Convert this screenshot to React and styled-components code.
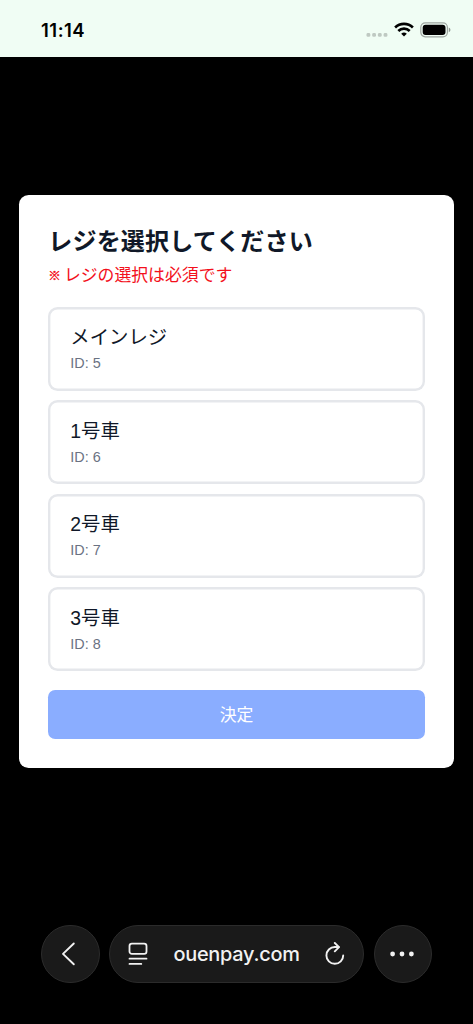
import React from 'react';
import styled, { createGlobalStyle, ThemeProvider } from 'styled-components';

const theme = {
  colors: {
    Mint: '#f0fdf4',
    Black: '#000000',
    White: '#ffffff',
    Ink: '#101828',
    Gray: '#6a7282',
    Line: '#e5e7eb',
    Red: '#f3101c',
    Blue: '#8aadff',
    Bar: '#1a1a1a',
    BarLine: '#2b2b2b',
    BarText: '#f2f2f2'
  },
  fonts: {
    Default: "'Liberation Sans', 'Noto Sans CJK JP', sans-serif",
    System: "Inter, 'Noto Sans CJK JP', sans-serif"
  }
};

const GlobalStyle = createGlobalStyle`
  * {
    box-sizing: border-box;
  }

  body {
    margin: 0;
    background: #000000;
  }
`;

const Screen = styled.div`
  display: flex;
  flex-direction: column;
  height: 1024px;
  overflow: hidden;
  background: ${(props) => props.theme.colors.Black};
  font-family: ${(props) => props.theme.fonts.Default};
`;

const StatusBar = styled.header`
  display: flex;
  align-items: center;
  justify-content: space-between;
  height: 57px;
  padding: 2px 22px 0 41px;
  background: ${(props) => props.theme.colors.Mint};
`;

const Time = styled.span`
  font-family: ${(props) => props.theme.fonts.System};
  font-size: 18.5px;
  font-weight: 600;
  line-height: 24px;
  letter-spacing: 0.5px;
  color: ${(props) => props.theme.colors.Black};
`;

const StatusIcons = styled.div`
  display: flex;
  align-items: center;
`;

const Main = styled.main`
  flex: 1;
  padding: 137.7px 19.3px 0;
`;

const Dialog = styled.section`
  display: flex;
  flex-direction: column;
  height: 573px;
  padding: 29px;
  border-radius: 9.6px;
  background: ${(props) => props.theme.colors.White};
`;

const Title = styled.h1`
  margin: 0;
  padding-top: 1px;
  font-size: 24.07px;
  font-weight: 700;
  line-height: 34px;
  letter-spacing: 0.12px;
  color: ${(props) => props.theme.colors.Ink};
`;

const Hint = styled.p`
  display: flex;
  align-items: center;
  gap: 3px;
  margin: 3px 0 17px;
  font-size: 16.85px;
  line-height: 27px;
  color: ${(props) => props.theme.colors.Red};
`;

const HintMark = styled.span`
  padding-top: 1px;
  font-size: 12.6px;
  font-weight: 700;
  -webkit-text-stroke: 0.4px;
`;

const RegisterList = styled.div`
  display: flex;
  flex-direction: column;
  gap: 9.6px;
`;

const RegisterButton = styled.button`
  display: flex;
  flex-direction: column;
  height: 83.9px;
  padding: 16.6px 22px 0;
  border: none;
  border-radius: 9.6px;
  background: ${(props) => props.theme.colors.White};
  box-shadow: inset 0 0 0 2.4px ${(props) => props.theme.colors.Line};
  font-family: inherit;
  text-align: left;
`;

const RegisterName = styled.span`
  font-size: 19.4px;
  line-height: 29px;
  color: ${(props) => props.theme.colors.Ink};
`;

const RegisterId = styled.span`
  font-size: 14.4px;
  line-height: 23px;
  color: ${(props) => props.theme.colors.Gray};
`;

const SubmitButton = styled.button`
  height: 49px;
  margin-top: 19px;
  padding: 0 0 2px;
  border: none;
  border-radius: 7.2px;
  background: ${(props) => props.theme.colors.Blue};
  font-family: inherit;
  font-size: 16.85px;
  color: ${(props) => props.theme.colors.White};
`;

const BrowserBar = styled.nav`
  display: flex;
  justify-content: space-between;
  padding: 0 41px 41px;
`;

const RoundButton = styled.button`
  display: flex;
  align-items: center;
  justify-content: center;
  width: 58.5px;
  height: 58.5px;
  padding: 0;
  border: 1px solid ${(props) => props.theme.colors.BarLine};
  border-radius: 50%;
  background: ${(props) => props.theme.colors.Bar};
`;

const AddressBar = styled.div`
  display: flex;
  align-items: center;
  justify-content: space-between;
  width: 255px;
  height: 58.5px;
  padding: 0 18px;
  border: 1px solid ${(props) => props.theme.colors.BarLine};
  border-radius: 30px;
  background: ${(props) => props.theme.colors.Bar};
`;

const Address = styled.span`
  font-family: ${(props) => props.theme.fonts.System};
  font-size: 19.9px;
  font-weight: 500;
  letter-spacing: -0.25px;
  color: ${(props) => props.theme.colors.BarText};
`;

const SignalIcon = () => (
  <svg width='22' height='16' viewBox='0 0 22 16' fill='#000' opacity='0.2'>
    <rect x='0.5' y='11' width='3.8' height='3.8' rx='1.4' />
    <rect x='6.2' y='11' width='3.8' height='3.8' rx='1.4' />
    <rect x='11.9' y='11' width='3.8' height='3.8' rx='1.4' />
    <rect x='17.6' y='11' width='3.8' height='3.8' rx='1.4' />
  </svg>
);

const WifiIcon = () => (
  <svg
    width='20'
    height='15'
    viewBox='0 0 20 15'
    fill='none'
    stroke='#000'
    strokeWidth='2.6'
    style={{ marginLeft: 6 }}
  >
    <path d='M1.1 5.5a12.7 12.7 0 0 1 17.8 0' />
    <path d='M4.3 9a8 8 0 0 1 11.4 0' />
    <path
      d='M7.2 11.8a4.2 4.2 0 0 1 5.6 0L10 14.6Z'
      fill='#000'
      stroke='none'
    />
  </svg>
);

const BatteryIcon = () => (
  <svg
    width='31'
    height='16'
    viewBox='0 0 31 16'
    fill='none'
    style={{ marginLeft: 6 }}
  >
    <rect
      x='0.8'
      y='0.8'
      width='26.6'
      height='14'
      rx='4.5'
      stroke='#000'
      strokeOpacity='0.35'
      strokeWidth='1.2'
    />
    <rect x='2.7' y='2.7' width='22.8' height='10.2' rx='2.9' fill='#000' />
    <path d='M28.8 5.4v4.8c2.2-.9 2.2-3.9 0-4.8Z' fill='#000' opacity='0.4' />
  </svg>
);

const BackIcon = () => (
  <svg
    width='16'
    height='26'
    viewBox='0 0 16 26'
    fill='none'
    stroke='#f2f2f2'
    strokeWidth='1.9'
    strokeLinecap='round'
    strokeLinejoin='round'
    style={{ marginRight: 4 }}
  >
    <path d='M13.8 2.5 3 12.9l10.8 10.4' />
  </svg>
);

const PageMenuIcon = () => (
  <svg
    width='20'
    height='24'
    viewBox='0 0 20 24'
    fill='none'
    stroke='#f2f2f2'
    strokeWidth='1.8'
    strokeLinecap='round'
  >
    <rect x='1.5' y='1.6' width='17' height='10.2' rx='2.4' />
    <path d='M1.5 16.7h17M1.5 21.9h11.8' />
  </svg>
);

const ReloadIcon = () => (
  <svg
    width='20'
    height='24'
    viewBox='0 0 20 24'
    fill='none'
    stroke='#f2f2f2'
    strokeWidth='1.9'
    strokeLinecap='round'
    strokeLinejoin='round'
  >
    <path d='M18.2 13.4A8.4 8.4 0 1 1 9.8 5h3.8' />
    <path d='M9.8 1l4.2 4.1-4.2 4.2' />
  </svg>
);

const MoreIcon = () => (
  <svg
    width='26'
    height='6'
    viewBox='0 0 26 6'
    fill='#f2f2f2'
    style={{ marginRight: 1 }}
  >
    <circle cx='3.6' cy='3' r='2.4' />
    <circle cx='13' cy='3' r='2.4' />
    <circle cx='22.4' cy='3' r='2.4' />
  </svg>
);

const registers = [
  { id: 5, name: 'メインレジ' },
  { id: 6, name: '1号車' },
  { id: 7, name: '2号車' },
  { id: 8, name: '3号車' }
];

const App = () => (
  <ThemeProvider theme={theme}>
    <GlobalStyle />
    <Screen>
      <StatusBar>
        <Time>11:14</Time>
        <StatusIcons>
          <SignalIcon />
          <WifiIcon />
          <BatteryIcon />
        </StatusIcons>
      </StatusBar>
      <Main>
        <Dialog>
          <Title>レジを選択してください</Title>
          <Hint>
            <HintMark>※</HintMark>
            レジの選択は必須です
          </Hint>
          <RegisterList>
            {registers.map((register) => (
              <RegisterButton key={register.id}>
                <RegisterName>{register.name}</RegisterName>
                <RegisterId>ID: {register.id}</RegisterId>
              </RegisterButton>
            ))}
          </RegisterList>
          <SubmitButton>決定</SubmitButton>
        </Dialog>
      </Main>
      <BrowserBar>
        <RoundButton>
          <BackIcon />
        </RoundButton>
        <AddressBar>
          <PageMenuIcon />
          <Address>ouenpay.com</Address>
          <ReloadIcon />
        </AddressBar>
        <RoundButton>
          <MoreIcon />
        </RoundButton>
      </BrowserBar>
    </Screen>
  </ThemeProvider>
);

export default App;
